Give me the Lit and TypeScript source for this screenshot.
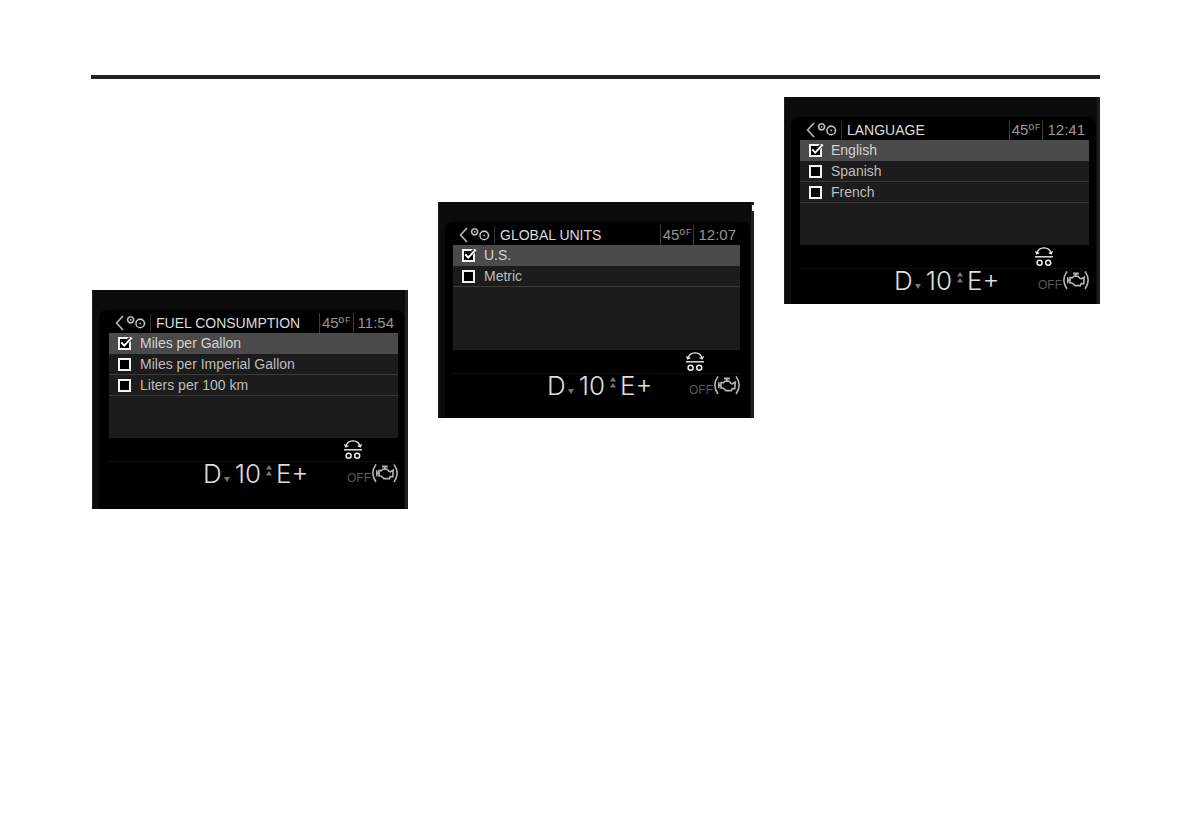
import { LitElement, html, css, svg } from "lit";
import { customElement, property, state } from "lit/decorators.js";
import { classMap } from "lit/directives/class-map.js";
import { live } from "lit/directives/live.js";

interface Screen {
  id: string;
  title: string;
  time: string;
  options: string[];
}

const SCREENS: Screen[] = [
  {
    id: "fuel",
    title: "FUEL CONSUMPTION",
    time: "11:54",
    options: ["Miles per Gallon", "Miles per Imperial Gallon", "Liters per 100 km"],
  },
  { id: "units", title: "GLOBAL UNITS", time: "12:07", options: ["U.S.", "Metric"] },
  { id: "language", title: "LANGUAGE", time: "12:41", options: ["English", "Spanish", "French"] },
];

const gear = (cx: number, cy: number, r: number) => svg`
  <circle cx=${cx} cy=${cy} r=${r} fill="none" stroke="#c8c8c8" stroke-width="1.4"></circle>
  <circle cx=${cx} cy=${cy} r=${r + 0.8} fill="none" stroke="#c8c8c8" stroke-width="0.5" stroke-dasharray="1 1.3"></circle>
  <circle cx=${cx} cy=${cy} r="0.9" fill="#c8c8c8"></circle>
`;

@customElement("vehicle-display")
export class VehicleDisplay extends LitElement {
  @property({ attribute: false }) screen!: Screen;
  @state() private selected = 0;

  static styles = css`
    :host {
      display: block;
      font-family: "Liberation Sans", Arial, sans-serif;
    }
    .bezel {
      position: relative;
      background: #0b0b0b;
      border-left: 1px solid #1e1e1e;
      border-right: 3px solid #1e1e1e;
      padding-top: 20px;
      box-sizing: border-box;
    }
    .glass {
      margin: 0 1px 0 6px;
      background: #000;
      border-radius: 8px 8px 0 0;
    }
    .fuel .glass {
      padding: 0 6px 23px 10px;
    }
    .units .glass {
      padding: 0 10px 20px 8px;
    }
    .language .glass {
      padding: 0 7px 11px 9px;
    }
    .units::after {
      content: "";
      position: absolute;
      top: 3px;
      right: -3px;
      width: 2px;
      height: 6px;
      background: #fff;
    }
    .top {
      display: flex;
      align-items: center;
      height: 23px;
      box-sizing: border-box;
      padding: 2px 4px 0 6px;
      color: #dcdcdc;
    }
    .back {
      display: flex;
      border: 0;
      padding: 0;
      background: none;
    }
    .title {
      flex: 1;
      margin: 0 0 0 3px;
      padding-left: 5px;
      border-left: 1px solid #333;
      font-size: 14px;
      line-height: 18px;
      font-weight: 400;
      white-space: nowrap;
    }
    .reading {
      display: flex;
      align-items: flex-start;
      padding-left: 2px;
      border-left: 1px solid #3c3c3c;
      font-size: 15px;
      line-height: 20px;
      color: #969696;
    }
    .unit {
      padding-left: 1px;
      font-size: 9px;
      line-height: 14px;
    }
    .clock {
      margin-left: 2px;
      padding-left: 4px;
    }
    .list {
      height: 105px;
      background: #1c1c1c;
    }
    .option {
      display: flex;
      align-items: center;
      gap: 7px;
      height: 21px;
      box-sizing: border-box;
      padding-left: 9px;
      border-bottom: 1px solid #3b3b3b;
      font-size: 14px;
      line-height: 20px;
      color: #bdbdbd;
    }
    .active {
      background: #4a4a4a;
      border-color: #4a4a4a;
      color: #d2d2d2;
    }
    .tick {
      display: grid;
      align-items: center;
      width: 15px;
      height: 17px;
    }
    .tick > * {
      grid-area: 1 / 1;
    }
    .box {
      appearance: none;
      width: 13px;
      height: 13px;
      margin: 0;
      border: 2px solid #f2f2f2;
      background: #000;
    }
    .mark {
      pointer-events: none;
    }
    .alerts {
      display: flex;
      justify-content: flex-end;
      align-items: center;
      height: 23px;
      padding-right: 35px;
      border-bottom: 1px solid #101010;
    }
    .drive {
      display: flex;
      justify-content: space-between;
      height: 24px;
      padding-left: 94px;
    }
    .gears {
      display: flex;
      align-items: center;
      font-family: Inter, "Liberation Sans", sans-serif;
      font-weight: 300;
      font-size: 26px;
      line-height: 24px;
      color: #dedede;
    }
    .down {
      align-self: flex-end;
      margin: 0 5px 4px 2px;
    }
    .up {
      align-self: flex-start;
      margin: 3px 4px 0 5px;
    }
    .engine {
      display: flex;
      align-items: flex-end;
      gap: 1px;
      font-size: 12px;
      line-height: 16px;
      color: #585858;
    }
  `;

  private option(label: string, i: number) {
    const on = i === this.selected;
    return html`
      <label class=${classMap({ option: true, active: on })}>
        <span class="tick">
          <input class="box" type="checkbox" .checked=${live(on)} @change=${() => this.pick(i)} />
          ${on
            ? html`<svg class="mark" width="15" height="17" viewBox="0 0 15 17" aria-hidden="true">
                <path d="M9.4 6.6 L12.4 3.4" fill="none" stroke="#222" stroke-width="4"></path>
                <path d="M3.2 7.4 L6.2 10.6 L13.8 2.6" fill="none" stroke="#fff" stroke-width="2"></path>
              </svg>`
            : null}
        </span>
        <span>${label}</span>
      </label>
    `;
  }

  private pick(i: number) {
    this.selected = i;
    this.requestUpdate();
  }

  render() {
    const s = this.screen;
    return html`
      <section class="bezel ${s.id}">
        <div class="glass">
          <header class="top">
            <button class="back" aria-label="Back to settings">
              <svg width="32" height="18" viewBox="0 0 32 18">
                <path d="M8 2 L1.6 9 L8 16" fill="none" stroke="#b5b5b5" stroke-width="1.7"></path>
                ${gear(15.6, 5.8, 2.9)} ${gear(25.2, 9.4, 4.2)}
              </svg>
            </button>
            <h2 class="title">${s.title}</h2>
            <span class="reading">45º<span class="unit">F</span></span>
            <span class="reading clock">${s.time}</span>
          </header>
          <div class="list">${s.options.map((o, i) => this.option(o, i))}</div>
          <div class="alerts">
            <svg width="20" height="22" viewBox="0 0 20 22" aria-hidden="true" fill="none" stroke="#ececec">
              <path d="M3 7.4 C4.6 0 15.4 0 17 7.4" stroke-width="1.4"></path>
              <path d="M0.8 5 L2.4 8.8 L6 7 Z M19.2 5 L17.6 8.8 L14 7 Z" fill="#ececec" stroke="none"></path>
              <path d="M1 10.8 H19" stroke-width="1.4"></path>
              <circle cx="5.6" cy="16.8" r="2.5" stroke-width="1.5"></circle>
              <circle cx="14.2" cy="16.8" r="2.5" stroke-width="1.5"></circle>
            </svg>
          </div>
          <div class="drive">
            <div class="gears">
              <span>D</span>
              <svg class="down" width="6" height="5" viewBox="0 0 6 5"><path d="M0 0 H6 L3 5 Z" fill="#777"></path></svg>
              <span>10</span>
              <svg class="up" width="6" height="11" viewBox="0 0 6 11">
                <path d="M3 0 L6 4.6 H0 Z M3 6 L6 10.6 H0 Z" fill="#777"></path>
              </svg>
              <span>E+</span>
            </div>
            <div class="engine">
              <span>OFF</span>
              <svg width="26" height="24" viewBox="0 0 26 24" aria-hidden="true" fill="none" stroke="#b4b4b4">
                <path d="M4 2.4 C0 8 0 14.4 4 20 M22 2.4 C26 8 26 14.4 22 20" stroke-width="1.6"></path>
                <path
                  d="M7 8.6 H9.4 L11 7.2 H15 L17 9.4 L18.4 9.8 L21.2 8.2 L20.8 14.6 L18.2 14.6 L17.4 16.6 H12 L9 14 H7 Z M4.8 8.2 V14.2 M4.8 11.2 H7"
                  stroke-width="1.6"
                ></path>
                <path d="M12.8 7.2 V4.6 M10 4.4 H15.8" stroke-width="2"></path>
              </svg>
            </div>
          </div>
        </div>
      </section>
    `;
  }
}

@customElement("app-root")
export class AppRoot extends LitElement {
  static styles = css`
    :host {
      display: block;
      min-height: 100vh;
      box-sizing: border-box;
      padding: 75px 91px 0;
      background: #fff;
    }
    .rule {
      height: 4px;
      margin: 0;
      border: 0;
      background: #231f20;
    }
    .columns {
      display: grid;
      grid-template-columns: repeat(3, minmax(0, 1fr));
      gap: 30px;
      align-items: start;
      padding: 18px 0 0 1px;
    }
    .fuel {
      margin-top: 193px;
    }
    .units {
      margin-top: 105px;
    }
  `;

  render() {
    return html`
      <main>
        <hr class="rule" />
        <div class="columns">
          ${SCREENS.map((s) => html`<vehicle-display class=${s.id} .screen=${s}></vehicle-display>`)}
        </div>
      </main>
    `;
  }
}
